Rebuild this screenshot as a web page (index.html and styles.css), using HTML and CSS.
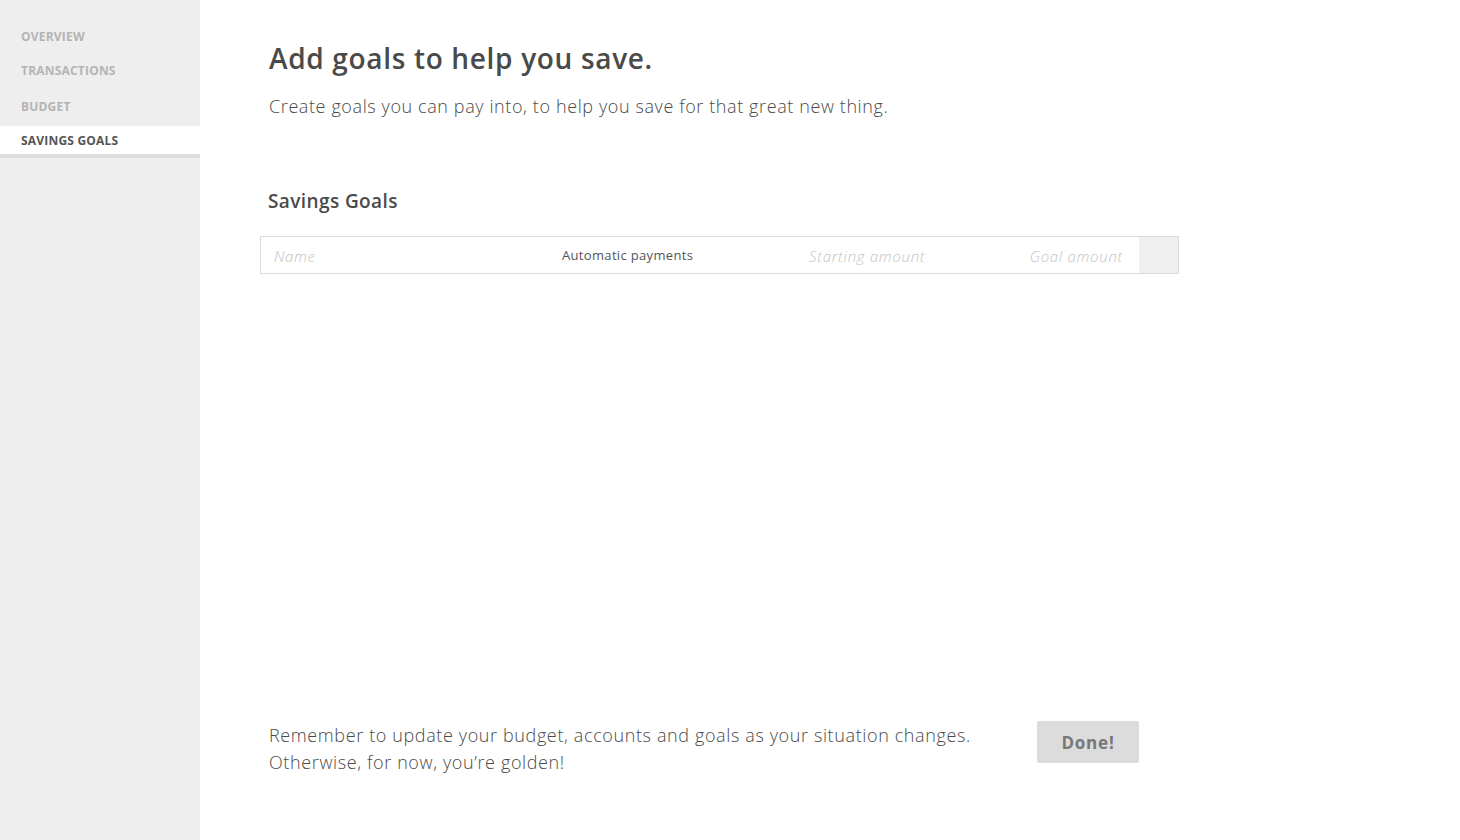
FILE: index.html
```html
<!DOCTYPE html>
<html>
<head>
<meta charset="utf-8">
<link rel="stylesheet" href="styles.css">
</head>
<body>
<div class="app">
  <nav class="sidebar">
    <a class="nav-item">OVERVIEW</a>
    <a class="nav-item">TRANSACTIONS</a>
    <a class="nav-item">BUDGET</a>
    <a class="nav-item active">SAVINGS GOALS</a>
  </nav>
  <main class="main">
    <h1 class="title">Add goals to help you save.</h1>
    <p class="subtitle">Create goals you can pay into, to help you save for that great new thing.</p>
    <h2 class="section-title">Savings Goals</h2>
    <div class="goal-row">
      <div class="cell cell-name placeholder">Name</div>
      <div class="cell cell-auto">Automatic payments</div>
      <div class="cell cell-start placeholder">Starting amount</div>
      <div class="cell cell-goal placeholder">Goal amount</div>
      <div class="cell cell-action"></div>
    </div>
    <div class="spacer"></div>
    <div class="footer">
      <p class="footer-text">Remember to update your budget, accounts and goals as your situation changes.<br>Otherwise, for now, you’re golden!</p>
      <button class="done">Done!</button>
    </div>
  </main>
</div>
</body>
</html>
```
FILE: styles.css
```css
html, body {
  margin: 0;
  padding: 0;
  height: 100%;
}
body {
  font-family: "Open Sans", Lato, sans-serif;
  color: #4a4a4a;
  background: #fff;
}
.app {
  display: flex;
  height: 840px;
}
.sidebar {
  width: 200px;
  flex: none;
  background: #eeeeee;
  display: flex;
  flex-direction: column;
  padding-top: 27px;
  box-sizing: border-box;
}
.nav-item {
  display: block;
  font-size: 12px;
  font-weight: 700;
  letter-spacing: 0.2px;
  color: #b4b4b4;
  padding: 5px 21px;
  line-height: 10px;
  margin-bottom: 14px;
}
.nav-item:nth-child(2) { margin-bottom: 16px; }
.nav-item.active {
  background: #fff;
  color: #555;
  padding: 10px 21px 8px 21px;
  border-bottom: 4px solid #dddddd;
  margin-top: -5px;
}
.main {
  flex: 1;
  display: flex;
  flex-direction: column;
  padding: 39px 0 0 60px;
}
.title {
  margin: 0;
  font-size: 28px;
  font-weight: 600;
  letter-spacing: 0.67px;
  line-height: 38px;
  color: #4a4a4a;
  padding-left: 9px;
}
.subtitle {
  margin: 17px 0 0 9px;
  font-size: 18px;
  font-weight: 300;
  letter-spacing: 0.6px;
  line-height: 24px;
  color: #4a4a4a;
}
.section-title {
  margin: 70px 0 0 8px;
  font-size: 19px;
  font-weight: 600;
  letter-spacing: 0.4px;
  line-height: 26px;
  color: #4a4a4a;
}
.goal-row {
  margin-top: 22px;
  width: 919px;
  height: 38px;
  box-sizing: border-box;
  border: 1px solid #dcdcdc;
  display: flex;
  align-items: center;
}
.cell {
  font-size: 14px;
}
.placeholder {
  font-style: italic;
  font-weight: 300;
  font-size: 15px;
  letter-spacing: 0.7px;
  color: #c3c3c3;
}
.cell-name {
  width: 288px;
  padding-left: 13px;
  margin-top: 2px;
}
.cell-auto {
  width: 247px;
  font-size: 13px;
  letter-spacing: 0.33px;
  color: #555;
}
.cell-start {
  width: 160px;
  margin-top: 2px;
}
.cell-goal {
  width: 154px;
  padding-right: 16px;
  text-align: right;
  margin-top: 2px;
}
.cell-action {
  margin-left: auto;
  width: 39px;
  height: 36px;
  background: #efefef;
}
.spacer { flex: 1; }
.footer {
  display: flex;
  align-items: flex-start;
  padding-left: 9px;
  margin-bottom: 64px;
}
.footer-text {
  margin: 0;
  font-size: 18px;
  font-weight: 300;
  letter-spacing: 0.62px;
  line-height: 27px;
  color: #4a4a4a;
  width: 768px;
}
.done {
  margin-top: -1px;
  width: 102px;
  height: 42px;
  border: none;
  border-radius: 2px;
  background: #dcdcdc;
  color: #777;
  font-family: "Open Sans", Lato, sans-serif;
  font-weight: 700;
  font-size: 17px;
  letter-spacing: 0.8px;
}
```
